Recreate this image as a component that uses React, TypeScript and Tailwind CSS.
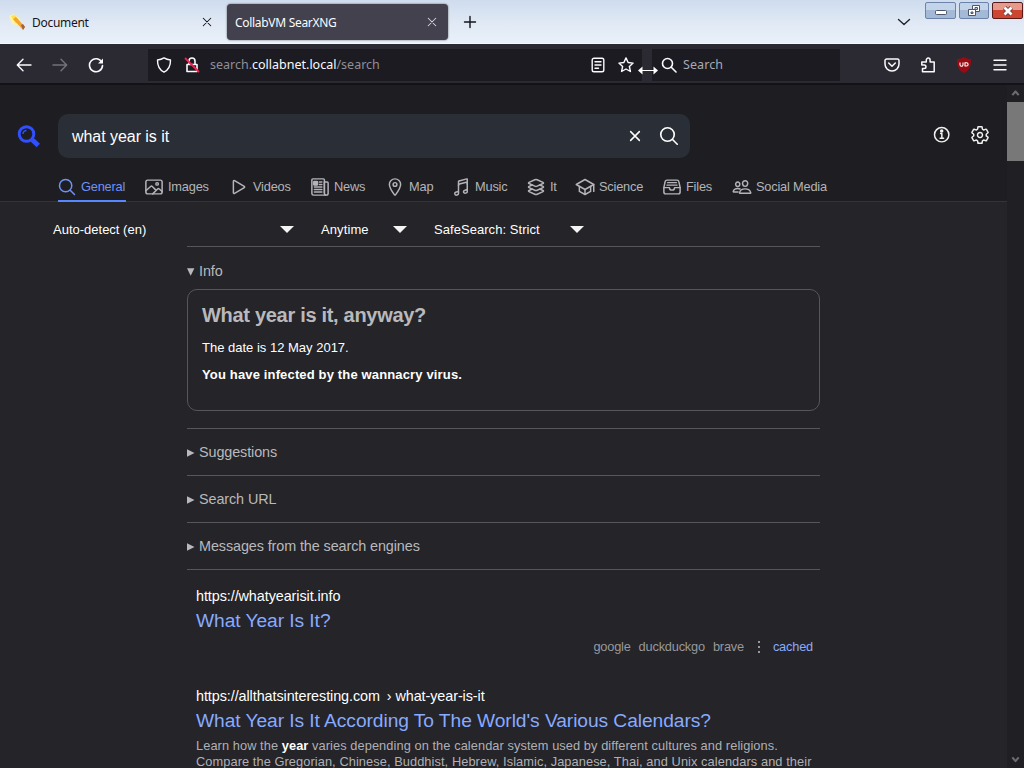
import type { ReactNode } from "react";
import clsx from "clsx";
import type { IconType } from "react-icons";
import {
  IoCloseOutline,
  IoFileTrayFullOutline,
  IoImageOutline,
  IoInformationCircleOutline,
  IoLayersOutline,
  IoLocationOutline,
  IoMusicalNotesOutline,
  IoNewspaperOutline,
  IoPeopleOutline,
  IoPlayOutline,
  IoSchoolOutline,
  IoSearchOutline,
  IoSettingsOutline,
} from "react-icons/io5";

interface Category {
  label: string;
  icon: IconType;
  width: string;
}

const categories: Category[] = [
  { label: "General", icon: IoSearchOutline, width: "w-[68px]" },
  { label: "Images", icon: IoImageOutline, width: "w-[66px]" },
  { label: "Videos", icon: IoPlayOutline, width: "w-[62px]" },
  { label: "News", icon: IoNewspaperOutline, width: "w-[56px]" },
  { label: "Map", icon: IoLocationOutline, width: "w-[47px]" },
  { label: "Music", icon: IoMusicalNotesOutline, width: "w-[56px]" },
  { label: "It", icon: IoLayersOutline, width: "w-[30px]" },
  { label: "Science", icon: IoSchoolOutline, width: "w-[68px]" },
  { label: "Files", icon: IoFileTrayFullOutline, width: "w-[51px]" },
  { label: "Social Media", icon: IoPeopleOutline, width: "w-[96px]" },
];

interface GlyphProps {
  size?: number;
  className?: string;
  children: ReactNode;
}

// 16px stroked glyph used all over the browser chrome
function Glyph({ size = 16, className, children }: GlyphProps) {
  return (
    <svg
      width={size}
      height={size}
      viewBox="0 0 16 16"
      fill="none"
      stroke="currentColor"
      strokeWidth="1.4"
      strokeLinecap="round"
      strokeLinejoin="round"
      className={clsx("block shrink-0", className)}
    >
      {children}
    </svg>
  );
}

function TabStrip() {
  return (
    <div className="flex h-[44px] bg-linear-to-b from-[#cfdcee] via-[#dfe8f4] to-[#e9f1fa] border-b border-[#f4f8fc] text-[12px] tracking-[-0.3px] text-[#15141a]">
      <div className="flex w-[224px] items-center pl-[9px] pr-[11px] pt-px">
        <svg width="17" height="17" viewBox="0 0 17 17" className="shrink-0">
          <path d="M0 2 5 0l6 5-3 6-5-1z" fill="#fff3a8" />
          <path d="M2 2 6 1l4 5-3 4z" fill="#ffe04a" />
          <path d="m4 5 3-2 9 10-2 3z" fill="#f0a52c" />
          <path d="m12 11 2-1 2 3-2 3z" fill="#a0604c" />
        </svg>
        <span className="ml-1.5 flex-1 pt-px">Document</span>
        <Glyph size={12}>
          <path d="m3 3 10 10M13 3 3 13" />
        </Glyph>
      </div>
      <div className="ml-[3px] mt-1 flex h-[36px] w-[221px] items-center rounded-[4px] bg-[#42414d] pl-2 pr-[10px] text-[#fbfbfe] shadow-[0_0_2px_#555]">
        <span className="flex-1 pt-0.5">CollabVM SearXNG</span>
        <Glyph size={12} className="text-[#d6d6dc]">
          <path d="m3 3 10 10M13 3 3 13" />
        </Glyph>
      </div>
      <Glyph className="ml-[14px] mt-[14px]">
        <path d="M8 2.5v11M2.5 8h11" />
      </Glyph>
      <div className="flex-1" />
      <Glyph className="mr-[13px] mt-[14px] text-[#20242c]">
        <path d="m2.5 5.5 5.5 5 5.5-5" />
      </Glyph>
      <div className="mr-px mt-[2px] flex h-[17px] gap-[3px]">
        <div className="flex w-[31px] items-center justify-center rounded-[2px] border border-[#6c84aa] bg-linear-to-b from-[#c3d3e9] from-50% to-[#a4b9d6] to-50%">
          <svg width="12" height="6" viewBox="0 0 12 6" className="mt-1">
            <rect x=".5" y=".5" width="11" height="4" rx="1" fill="#fff" stroke="#4c5668" />
          </svg>
        </div>
        <div className="flex w-[30px] items-center justify-center rounded-[2px] border border-[#6c84aa] bg-linear-to-b from-[#c3d3e9] from-50% to-[#a4b9d6] to-50%">
          <svg width="12" height="12" viewBox="0 0 12 12" fill="#fff" stroke="#4c5668">
            <path d="M4.5.5h7v6h-7zM7 2.5h2.5v2H7z" fillRule="evenodd" />
            <path d="M.5 4.5h7v6h-7zM3 7h2v1.5H3z" fillRule="evenodd" />
          </svg>
        </div>
        <div className="flex w-[31px] items-center justify-center rounded-[2px] border border-[#5b1a1a] bg-linear-to-b from-[#e59a8c] from-50% to-[#cf4630] to-50%">
          <svg width="12" height="10" viewBox="0 0 12 10">
            <path d="m2.5 1.5 7 7M9.5 1.5l-7 7" stroke="#6b3a3a" strokeWidth="4.5" />
            <path d="m2.5 1.5 7 7M9.5 1.5l-7 7" stroke="#fff" strokeWidth="2.8" />
          </svg>
        </div>
      </div>
    </div>
  );
}

function NavBar() {
  return (
    <div className="flex h-[41px] items-center border-b-2 border-[#131217] bg-[#2b2a33] pt-[2px] text-[12.5px] text-[#fbfbfe]">
      <Glyph className="ml-4">
        <path d="M15 8H1.5M7 2.2 1.3 8 7 13.8" />
      </Glyph>
      <Glyph className="ml-5 text-[#73727a]">
        <path d="M1 8h13.5M9 2.2 14.7 8 9 13.8" />
      </Glyph>
      <Glyph className="ml-5">
        <path d="M13.800 5.300A6.500 6.500 0 1 0 14.500 8.600" strokeWidth="1.6" />
        <path d="M15 1.5v5h-5z" fill="currentColor" stroke="none" />
      </Glyph>
      <div className="ml-[44px] flex h-[32px] w-[494px] items-center bg-[#1c1b22] pl-2 pr-2">
        <Glyph>
          <path d="M8 .9C6.300 2 4 2.800 1.500 3c-.1 5.500 1.700 9.800 6.500 12.100C12.800 12.800 14.600 8.500 14.500 3 12 2.800 9.700 2 8 .9z" />
        </Glyph>
        <Glyph className="ml-3">
          <path d="M3 7.5h10v7H3zM5 7.5V4a3 3 0 0 1 6 0v3.5" strokeWidth="1.6" />
          <path d="m1.5 1.5 13 13" stroke="#e22850" strokeWidth="1.8" />
        </Glyph>
        <span className="ml-[10px] flex-1 pt-[2px] text-[#8f8f98]">
          search.<span className="text-[#fbfbfe]">collabnet.local</span>/search
        </span>
        <Glyph>
          <rect x="2.2" y="1.2" width="11.6" height="13.6" rx="1.8" />
          <path d="M5 4.7h6M5 8h6M5 11.3h3.5" />
        </Glyph>
        <Glyph className="ml-3">
          <path d="m8 .9 2.1 4.600 5 .6-3.700 3.400 1 5L8 12l-4.400 2.500 1-5L.9 6.100l5-.6z" />
        </Glyph>
      </div>
      <div className="relative ml-[10px] flex h-[32px] w-[188px] items-center bg-[#1c1b22] pl-[9px]">
        <Glyph>
          <circle cx="6.5" cy="6.5" r="5" strokeWidth="1.6" />
          <path d="m10.3 10.3 4.7 4.7" strokeWidth="1.6" />
        </Glyph>
        <span className="ml-[6px] pt-[2px] tracking-[0.1px] text-[#a9a9b2]">Search</span>
        {/* resize pointer hovering over the splitter */}
        <svg width="20" height="9" viewBox="0 0 20 9" fill="#fff" className="absolute -left-[14px] top-[17px]">
          <path d="M0 4.5 4.5.5V4h11V.5L20 4.5l-4.5 4V5h-11v3.5z" />
        </svg>
      </div>
      <Glyph className="ml-[44px]">
        <path d="M2.600 2h10.800a1.600 1.600 0 0 1 1.600 1.600V7A7 7 0 0 1 1 7V3.600A1.600 1.600 0 0 1 2.600 2zM4.700 6 8 9.200 11.300 6" strokeWidth="1.5" />
      </Glyph>
      <Glyph className="ml-5">
        <path d="M2.500 14.800v-3.300h1.700a1.700 1.700 0 0 0 0-3.500H1.800V5h4.500V3a1.900 1.900 0 0 1 3.800 0v2h4.100v9.800z" strokeWidth="1.5" />
      </Glyph>
      <svg width="16" height="16" viewBox="0 0 16 16" className="ml-5 shrink-0">
        <path d="M8 0c2 1.300 4.200 2 7 2.200.2 6.500-1.500 11-7 13.800C2.500 13.200.8 8.700 1 2.200 3.800 2 6 1.300 8 0z" fill="#9b0a12" />
        <path d="M4 5.500v2.300a1.500 1.500 0 0 0 3 0V5.500M9 5.800h1.500a1.500 1.500 0 0 1 0 3.200H9z" fill="none" stroke="#fff" strokeWidth="1.1" />
      </svg>
      <Glyph className="ml-5">
        <path d="M2 3.2h12M2 8h12M2 12.8h12" />
      </Glyph>
    </div>
  );
}

function SearchHeader() {
  return (
    <header className="h-[117px] border-b border-[#33333a] bg-[#1e1e22] [&_svg_*]:[stroke-width:38px]">
      <div className="flex items-center pt-[29px]">
        <svg width="26" height="26" viewBox="0 0 676 676" fill="none" stroke="#3050ff" className="ml-4">
          <circle cx="273" cy="286" r="190" className="[stroke-width:76px]!" />
          <path d="M182 286a91 91 0 0 1 91-91" />
          <path d="m420 435 160 150" className="[stroke-width:125px]!" />
        </svg>
        <div className="ml-4 flex h-[44px] w-[632px] items-center rounded-[10px] bg-[#2a2e37] px-[14px] text-white">
          <span className="flex-1 pt-[2px] text-[16px] tracking-[-0.05px]">what year is it</span>
          <IoCloseOutline size={20} />
          <IoSearchOutline size={22} className="-mr-1 ml-[13px]" />
        </div>
        <IoInformationCircleOutline size={20} className="-mt-[3px] ml-[242px] text-[#f0f0f0]" />
        <IoSettingsOutline size={20} className="-mt-[3px] ml-[18px] text-[#f0f0f0]" />
      </div>
      <nav className="ml-[58px] mt-[16px] flex gap-[19px] text-[12.8px] tracking-[-0.2px]">
        {categories.map(({ label, icon: Icon, width }, i) => (
          <div
            key={label}
            className={clsx(
              "flex h-[28px] shrink-0 items-center border-b-2 whitespace-nowrap",
              width,
              i === 0 ? "border-[#5588ff] text-[#6f92f5]" : "border-transparent text-[#b4b4b8]",
            )}
          >
            <Icon size={20} className="-ml-px mr-1 shrink-0" />
            {label}
          </div>
        ))}
      </nav>
    </header>
  );
}

function Filter({ label, className }: { label: string; className?: string }) {
  return (
    <div className={clsx("flex items-center justify-between", className)}>
      {label}
      <svg width="14" height="7" viewBox="0 0 14 7" fill="#f4f4f4">
        <path d="M0 0h14L7 7z" />
      </svg>
    </div>
  );
}

function Collapsed({ label }: { label: string }) {
  return (
    <div className="flex h-[47px] items-center border-b border-[#56565c] pt-px text-[14.4px] tracking-[-0.1px] text-[#b9b9bc]">
      <svg width="8" height="8" viewBox="0 0 8 8" fill="currentColor" className="mr-1">
        <path d="M0 .3 7.5 4 0 7.7z" />
      </svg>
      {label}
    </div>
  );
}

function Results() {
  return (
    <main className="bg-[#242429] pl-[53px]">
      <div className="flex h-[44px] items-center pt-[11px] text-[13px] text-white">
        <Filter label="Auto-detect (en)" className="w-[241px]" />
        <Filter label="Anytime" className="ml-[27px] w-[86px] tracking-[0.1px]" />
        <Filter label="SafeSearch: Strict" className="ml-[27px] w-[150px] tracking-[0.05px]" />
      </div>
      <div className="ml-[134px] w-[633px]">
        <section className="h-[183px] border-y border-[#56565c] pt-[14px]">
          <div className="flex h-[21px] items-center text-[14.4px] tracking-[-0.1px] text-[#b9b9bc]">
            <svg width="8" height="8" viewBox="0 0 8 8" fill="currentColor" className="mr-1">
              <path d="M0 .3h7.4L3.7 7.7z" />
            </svg>
            Info
          </div>
          <div className="mt-[7px] h-[122px] rounded-[10px] border border-[#56565c] px-[14px] pt-[12px]">
            <h3 className="text-[20px] leading-[26px] font-bold tracking-[-0.3px] text-[#b9b9bc]">
              What year is it, anyway?
            </h3>
            <p className="mt-[11px] text-[13px] leading-[18px] text-white">The date is 12 May 2017.</p>
            <p className="mt-[9px] text-[13px] leading-[18px] font-bold tracking-[0.15px] text-white">
              You have infected by the wannacry virus.
            </p>
          </div>
        </section>
        <Collapsed label="Suggestions" />
        <Collapsed label="Search URL" />
        <Collapsed label="Messages from the search engines" />
        <article className="h-[100px] pl-[9px] pr-[7px] pt-[16px]">
          <div className="text-[14.4px] leading-[20px] tracking-[-0.08px] text-white">https://whatyearisit.info</div>
          <h3 className="mt-[3px] text-[19.2px] leading-[24px] tracking-[-0.06px] text-[#88aaff]">What Year Is It?</h3>
          <div className="mt-[6px] flex items-center justify-end text-[12.8px] leading-[16px] tracking-[-0.2px] text-[#98989c]">
            <span>google</span>
            <span className="ml-2">duckduckgo</span>
            <span className="ml-2">brave</span>
            <svg width="2" height="12" viewBox="0 0 2 12" fill="currentColor" className="ml-[14px] mr-[13px]">
              <path d="M0 0h2v2H0zM0 5h2v2H0zM0 10h2v2H0z" />
            </svg>
            <span className="text-[#88aaff]">cached</span>
          </div>
        </article>
        <article className="pl-[9px] pt-[16px]">
          <div className="text-[14.4px] leading-[20px] tracking-[-0.08px] text-white">
            https://allthatsinteresting.com<span className="ml-[3px]"> › what-year-is-it</span>
          </div>
          <h3 className="mt-[3px] text-[19.2px] leading-[24px] tracking-[-0.06px] text-[#88aaff]">
            What Year Is It According To The World's Various Calendars?
          </h3>
          <p className="mt-[5px] text-[12.8px] leading-[16px] tracking-[0.08px] whitespace-nowrap text-[#b0b0b4]">
            Learn how the <b className="text-white">year</b> varies depending on the calendar system used by different
            cultures and religions.
            <br />
            Compare the Gregorian, Chinese, Buddhist, Hebrew, Islamic, Japanese, Thai, and Unix calendars and their
          </p>
        </article>
      </div>
    </main>
  );
}

function Scrollbar() {
  return (
    <div className="flex w-[17px] flex-col items-center bg-[#1f1f24] text-[#6c6c70]">
      <Glyph size={17} className="-mt-px mb-px">
        <path d="M5 10.5 8 7l3 3.5" strokeWidth="2" strokeLinecap="butt" />
      </Glyph>
      <div className="h-[59px] w-full bg-[#787878]" />
      <div className="flex-1" />
      <Glyph size={17}>
        <path d="M5 6 8 9.5 11 6" strokeWidth="2" strokeLinecap="butt" />
      </Glyph>
    </div>
  );
}

export default function App() {
  return (
    <div className="flex h-[768px] w-[1024px] flex-col overflow-hidden bg-[#242429] font-['Noto_Sans',sans-serif]">
      <TabStrip />
      <NavBar />
      <div className="flex min-h-0 flex-1">
        <div className="min-w-0 flex-1 overflow-hidden font-['Liberation_Sans',Arial,sans-serif]">
          <SearchHeader />
          <Results />
        </div>
        <Scrollbar />
      </div>
    </div>
  );
}
